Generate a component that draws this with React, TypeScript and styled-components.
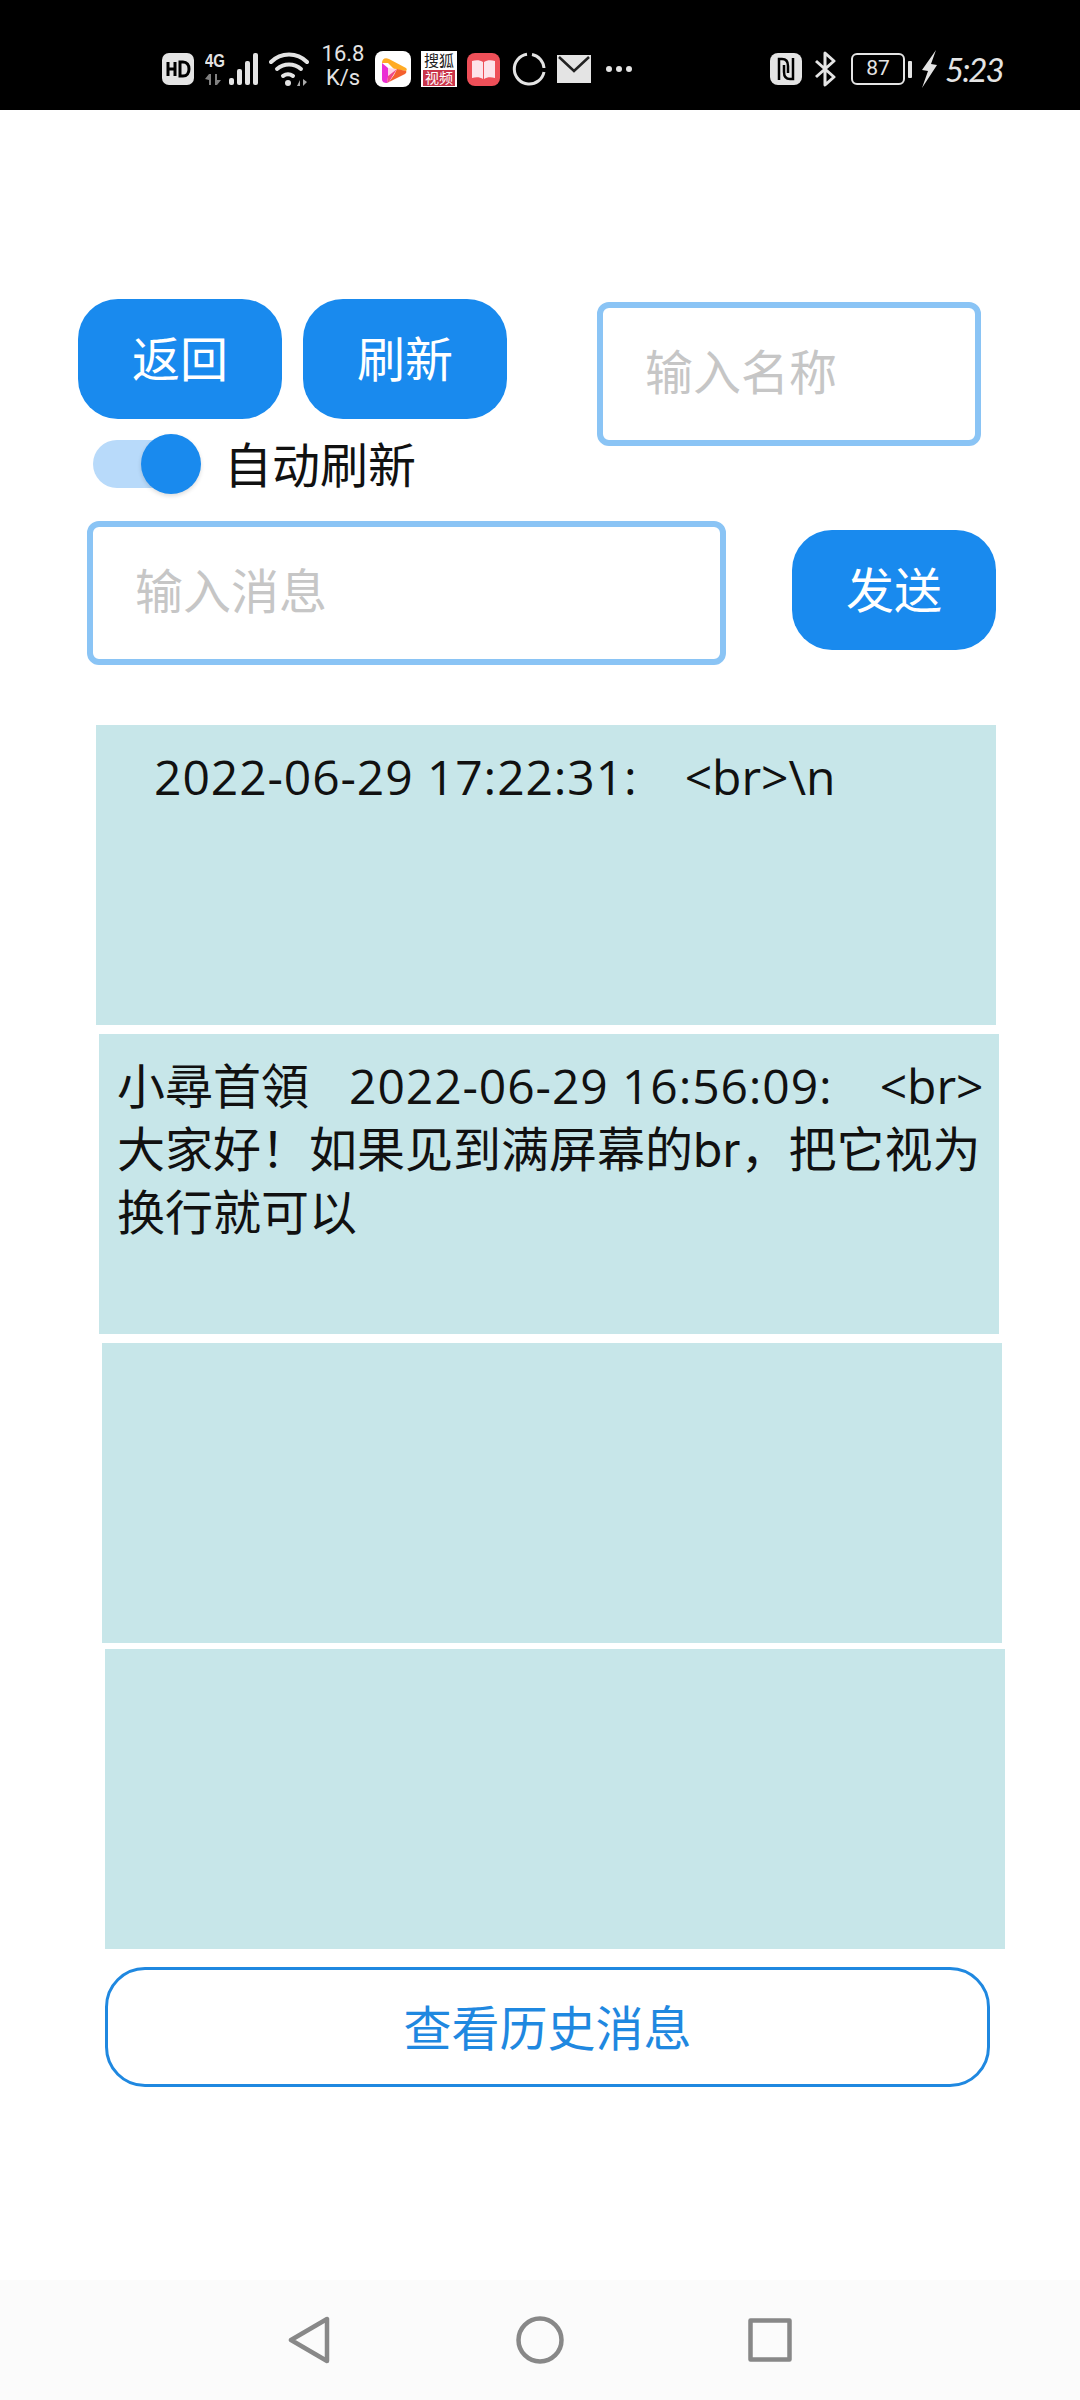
import React from 'react'
import styled, { createGlobalStyle } from 'styled-components'

const GlobalStyle = createGlobalStyle`
  html, body {
    margin: 0;
    padding: 0;
    background: #ffffff;
  }
  * {
    box-sizing: border-box;
  }
  body {
    font-family: 'Inter', 'Noto Sans CJK SC', sans-serif;
  }
`

const Page = styled.div`
  width: 1080px;
  height: 2400px;
  display: flex;
  flex-direction: column;
  overflow: hidden;
  background: #ffffff;
`

const StatusBar = styled.div`
  height: 110px;
  flex-shrink: 0;
  background: #000000;
  display: flex;
  align-items: flex-start;
  justify-content: space-between;
  padding: 50px 77px 0 162px;
`

const StatusGroup = styled.div<{ $gap: number }>`
  display: flex;
  align-items: center;
  gap: ${(p) => p.$gap}px;
  height: 38px;
`

const NetSpeed = styled.div`
  width: 44px;
  margin: -6px 0 0 2px;
  color: #e4e4e4;
  font-family: 'Roboto', sans-serif;
  font-size: 22px;
  line-height: 24px;
  text-align: center;
`

const SohuIcon = styled.div`
  width: 36px;
  height: 36px;
  background: #ffffff;
  padding: 1px 2px;
  display: flex;
  flex-direction: column;
  align-items: center;
  color: #222222;
  font-size: 15px;
  line-height: 18px;
  white-space: nowrap;
`

const SohuBadge = styled.div`
  width: 32px;
  height: 16px;
  background: #c9344a;
  color: #ffffff;
  font-size: 14px;
  line-height: 16px;
  text-align: center;
`

const Battery = styled.div`
  width: 54px;
  height: 32px;
  margin-left: 3px;
  border: 2.5px solid #e4e4e4;
  border-radius: 6px;
  color: #e4e4e4;
  font-family: 'Roboto', sans-serif;
  font-size: 21px;
  line-height: 27px;
  text-align: center;
`

const BatteryNub = styled.div`
  width: 4px;
  height: 17px;
  margin: 0 -3px 0 -9px;
  background: #e4e4e4;
  border-radius: 1px;
`

const Clock = styled.div`
  width: 58px;
  margin-left: -5px;
  color: #e4e4e4;
  font-family: 'Lato', sans-serif;
  font-size: 33px;
  font-style: italic;
  line-height: 38px;
  letter-spacing: -2px;
  white-space: nowrap;
`

const Content = styled.div`
  flex: 1;
  display: flex;
  flex-direction: column;
  padding-top: 189px;
`

const TopRow = styled.div`
  display: flex;
  padding-left: 78px;
`

const LeftColumn = styled.div`
  display: flex;
  flex-direction: column;
`

const ButtonRow = styled.div`
  display: flex;
  gap: 21px;
`

const FilledButton = styled.button`
  width: 204px;
  height: 120px;
  border: none;
  border-radius: 40px;
  background: #198aee;
  color: #ffffff;
  font-family: inherit;
  font-size: 48px;
  padding: 0 0 6px;
`

const TextField = styled.input<{ $width: number }>`
  width: ${(p) => p.$width}px;
  height: 144px;
  border: 6px solid #8ac4f5;
  border-radius: 12px;
  padding: 0 42px 3px;
  background: #ffffff;
  font-family: inherit;
  font-size: 48px;
  outline: none;

  &::placeholder {
    color: #c6c6c6;
    opacity: 1;
  }
`

const NameField = styled(TextField)`
  margin: 3px 0 0 90px;
`

const ToggleRow = styled.div`
  display: flex;
  align-items: center;
  height: 60px;
  margin: 15px 0 0 15px;
`

const ToggleTrack = styled.div`
  width: 97px;
  height: 48px;
  border-radius: 24px;
  background: #b8dafa;
  display: flex;
  align-items: center;
  justify-content: flex-end;
`

const ToggleThumb = styled.div`
  width: 60px;
  height: 60px;
  flex-shrink: 0;
  margin-right: -11px;
  border-radius: 50%;
  background: #198aee;
  box-shadow: 0 2px 4px rgba(0, 0, 0, 0.14);
`

const ToggleLabel = styled.span`
  margin: 0 0 4px 34px;
  color: #111111;
  font-size: 48px;
`

const SendRow = styled.div`
  display: flex;
  align-items: flex-start;
  gap: 66px;
  margin-top: 27px;
  padding-left: 87px;
`

const SendButton = styled(FilledButton)`
  margin-top: 9px;
`

const MessageList = styled.div`
  display: flex;
  flex-direction: column;
  margin-top: 60px;
`

const MessageCard = styled.div<{ $indent: number; $gap: number }>`
  width: 900px;
  height: 300px;
  margin: ${(p) => p.$gap}px 0 0 ${(p) => p.$indent}px;
  padding: 20px 10px 0 18px;
  background: #c7e6e9;
  color: #111111;
  font-size: 48px;
  line-height: 63px;
  white-space: pre-wrap;
`

const Stamp = styled.span`
  font-family: 'Open Sans', 'Noto Sans CJK SC', sans-serif;
  letter-spacing: 0.9px;
`

const RawTag = styled.span`
  margin-left: 7px;
  font-family: 'Open Sans', 'Noto Sans CJK SC', sans-serif;
`

const HistoryButton = styled.button`
  width: 885px;
  height: 120px;
  margin: 18px 0 0 105px;
  border: 3px solid #1f88e0;
  border-radius: 40px;
  background: #ffffff;
  color: #1f88e0;
  font-family: inherit;
  font-size: 48px;
  padding: 0 0 4px;
`

const NavBar = styled.div`
  height: 120px;
  flex-shrink: 0;
  background: #fbfbfb;
  display: flex;
  align-items: center;
  padding-left: 288px;
`

const NavIcon = styled.svg<{ $left?: number }>`
  margin-left: ${(p) => p.$left ?? 0}px;
  fill: none;
  stroke: #888888;
  stroke-width: 4.5;
  stroke-linejoin: round;
`

const messages = [
  { indent: 96, gap: 0, name: '', stamp: '   2022-06-29 17:22:31:   ', tag: '<br>\\n', body: '' },
  {
    indent: 99,
    gap: 9,
    name: '小尋首領',
    stamp: '   2022-06-29 16:56:09:   ',
    tag: '<br>',
    body: '大家好！如果见到满屏幕的br，把它视为换行就可以',
  },
  { indent: 102, gap: 9, name: '', stamp: '', tag: '', body: '' },
  { indent: 105, gap: 6, name: '', stamp: '', tag: '', body: '' },
]

const LeftStatus = () => (
  <StatusGroup $gap={10}>
    <svg width="32" height="32" viewBox="0 0 32 32">
      <rect width="32" height="32" rx="7" fill="#e4e4e4" />
      <path
        d="M6 9v14M13 9v14M6 16h7M18 9v14h3c4 0 6-3 6-7s-2-7-6-7z"
        fill="none"
        stroke="#000"
        strokeWidth="3"
      />
    </svg>
    <svg width="54" height="36" viewBox="0 0 54 36" fill="#e4e4e4" style={{ marginLeft: 1 }}>
      <text
        x="0"
        y="16"
        fontFamily="Liberation Sans, sans-serif"
        fontSize="19"
        fontWeight="700"
        textLength="20"
        lengthAdjust="spacingAndGlyphs"
      >
        4G
      </text>
      <path d="M4 23v11h2V23zM0 28l4-5v6zM10 23v11h2V23zM12 34l4-5h-4z" fill="#808080" />
      <rect x="24" y="27" width="5" height="7" rx="2" />
      <rect x="32" y="18" width="5" height="16" rx="2" />
      <rect x="40" y="10" width="5" height="24" rx="2" />
      <rect x="48" y="2" width="5" height="32" rx="2" />
    </svg>
    <svg width="40" height="36" viewBox="0 0 40 36" fill="none" stroke="#e4e4e4" strokeWidth="4" strokeLinecap="round">
      <path d="M2 11c10-10 26-10 36 0" />
      <path d="M8 18c7-6 17-6 24 0" />
      <path d="M14 25c3-2 7-2 10 0" />
      <circle cx="19" cy="32" r="3" fill="#e4e4e4" stroke="none" />
      <path d="M28 35l3-6v6zM34 28v7l4-4z" fill="#aaa" stroke="none" />
    </svg>
    <NetSpeed>
      16.8
      <br />
      K/s
    </NetSpeed>
    <svg width="36" height="36" viewBox="0 0 36 36">
      <rect width="36" height="36" rx="8" fill="#ffffff" />
      <path d="M7 12c0-4 3-6 7-4l17 9c1 1 1 2 0 3l-12-2-6-6z" fill="#ffab25" />
      <path d="M31 20c1 1 0 2-1 3L14 31l5-7 3-6z" fill="#f4602e" />
      <path d="M7 12l6 5v9l-1 6c-3 0-5-1-5-4z" fill="#ea2fd4" />
      <path d="M13 17l9 1-9 7z" fill="#ffd5e8" />
      <path d="M13 25l9-7-8 13-2 1z" fill="#f04a86" />
    </svg>
    <SohuIcon>
      搜狐
      <SohuBadge>视频</SohuBadge>
    </SohuIcon>
    <svg width="33" height="33" viewBox="0 0 33 33">
      <rect width="33" height="33" rx="8" fill="#ee4f58" />
      <path d="M5 8c4-1 8-1 11 1v17c-3-2-7-2-11-1zM28 8c-4-1-8-1-11 1v17c3-2 7-2 11-1z" fill="#fde3ea" />
    </svg>
    <svg width="34" height="34" viewBox="0 0 34 34" fill="none" stroke="#e4e4e4" strokeWidth="3" style={{ marginLeft: 2 }}>
      <path d="M20 2.500A15 15 0 0 1 32 16" />
      <path d="M32 20A15 15 0 1 1 15 2.200" />
    </svg>
    <svg width="34" height="28" viewBox="0 0 34 28" style={{ marginLeft: 1 }}>
      <rect width="34" height="28" fill="#e4e4e4" />
      <path d="M2 2l15 14L32 2" fill="none" stroke="#222" strokeWidth="2.500" />
    </svg>
    <svg width="26" height="8" viewBox="0 0 26 8" fill="#e4e4e4" style={{ marginLeft: 5 }}>
      <circle cx="3" cy="4" r="3" />
      <circle cx="13" cy="4" r="3" />
      <circle cx="23" cy="4" r="3" />
    </svg>
  </StatusGroup>
)

const RightStatus = () => (
  <StatusGroup $gap={12}>
    <svg width="32" height="32" viewBox="0 0 32 32">
      <rect width="32" height="32" rx="8" fill="#e4e4e4" />
      <path d="M9 27V6h3c4 0 6 3 6 7v7M23 5v21h-3c-4 0-6-3-6-7v-7" fill="none" stroke="#000" strokeWidth="2.500" />
    </svg>
    <svg width="22" height="36" viewBox="0 0 22 36" fill="none" stroke="#e4e4e4" strokeWidth="3" strokeLinejoin="round">
      <path d="M2 10l18 16-9 8V2l9 8L2 26" />
    </svg>
    <Battery>87</Battery>
    <BatteryNub />
    <svg width="17" height="38" viewBox="0 0 17 38" fill="#e4e4e4">
      <path d="M15 0 1 20l6 1-6 17 15-23-6-1z" />
    </svg>
    <Clock>5:23</Clock>
  </StatusGroup>
)

export default function App() {
  return (
    <Page>
      <GlobalStyle />
      <StatusBar>
        <LeftStatus />
        <RightStatus />
      </StatusBar>
      <Content>
        <TopRow>
          <LeftColumn>
            <ButtonRow>
              <FilledButton>返回</FilledButton>
              <FilledButton>刷新</FilledButton>
            </ButtonRow>
            <ToggleRow>
              <ToggleTrack>
                <ToggleThumb />
              </ToggleTrack>
              <ToggleLabel>自动刷新</ToggleLabel>
            </ToggleRow>
          </LeftColumn>
          <NameField $width={384} placeholder="输入名称" />
        </TopRow>
        <SendRow>
          <TextField $width={639} placeholder="输入消息" />
          <SendButton>发送</SendButton>
        </SendRow>
        <MessageList>
          {messages.map((m, i) => (
            <MessageCard key={i} $indent={m.indent} $gap={m.gap}>
              {m.name}
              <Stamp>{m.stamp}</Stamp>
              {m.tag && <RawTag>{m.tag}</RawTag>}
              {m.body}
            </MessageCard>
          ))}
        </MessageList>
        <HistoryButton>查看历史消息</HistoryButton>
      </Content>
      <NavBar>
        <NavIcon width="42" height="48" viewBox="0 0 42 48">
          <path d="M39 3v42L3 24z" />
        </NavIcon>
        <NavIcon $left={186} width="48" height="48" viewBox="0 0 48 48">
          <circle cx="24" cy="24" r="21.500" />
        </NavIcon>
        <NavIcon $left={184} width="44" height="44" viewBox="0 0 44 44">
          <rect x="2.500" y="2.500" width="39" height="39" />
        </NavIcon>
      </NavBar>
    </Page>
  )
}
